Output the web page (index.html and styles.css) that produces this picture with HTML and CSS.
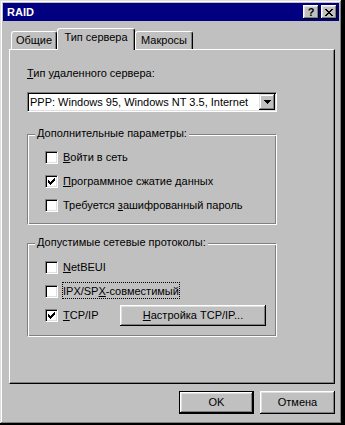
FILE: index.html
```html
<!DOCTYPE html>
<html lang="ru">
<head>
<meta charset="utf-8">
<title>RAID</title>
<link rel="stylesheet" href="styles.css">
</head>
<body>
<div class="window">
  <div class="titlebar">
    <span class="title">RAID</span>
    <div class="caption-btns">
      <span class="cbtn help">?</span>
      <span class="cbtn close"><svg viewBox="0 0 8 7" shape-rendering="crispEdges"><path d="M0 0h2v1h-2zM6 0h2v1h-2zM1 1h2v1h-2zM5 1h2v1h-2zM2 2h4v1h-4zM3 3h2v1h-2zM2 4h4v1h-4zM1 5h2v1h-2zM5 5h2v1h-2zM0 6h2v1h-2zM6 6h2v1h-2z" fill="#000"/></svg></span>
    </div>
  </div>

  <div class="tabs">
    <div class="tab tab-general">Общие</div>
    <div class="tab tab-server active">Тип сервера</div>
    <div class="tab tab-macro">Макросы</div>
  </div>

  <div class="panel">
    <div class="field-label"><u>Т</u>ип удаленного сервера:</div>
    <div class="combo">
      <span class="combo-text">PPP: Windows 95, Windows NT 3.5, Internet</span>
      <span class="combo-btn"><svg viewBox="0 0 7 4" shape-rendering="crispEdges"><path d="M0 0h7v1h-7zM1 1h5v1h-5zM2 2h3v1h-3zM3 3h1v1h-1z" fill="#000"/></svg></span>
    </div>

    <div class="group group-extra">
      <div class="group-title">Дополнительные параметры:</div>
      <div class="check-row row-a">
        <span class="box"></span>
        <span class="check-label"><u>В</u>ойти в сеть</span>
      </div>
      <div class="check-row row-b">
        <span class="box"><svg viewBox="0 0 7 7" shape-rendering="crispEdges"><path d="M6 0h1v1h-1zM5 1h2v1h-2zM0 2h1v1h-1zM4 2h3v1h-3zM0 3h2v1h-2zM3 3h3v1h-3zM0 4h5v1h-5zM1 5h3v1h-3zM2 6h1v1h-1z" fill="#000"/></svg></span>
        <span class="check-label"><u>П</u>рограммное сжатие данных</span>
      </div>
      <div class="check-row row-b">
        <span class="box"></span>
        <span class="check-label">Требуется <u>з</u>ашифрованный пароль</span>
      </div>
    </div>

    <div class="group group-proto">
      <div class="group-title">Допустимые сетевые протоколы:</div>
      <div class="check-row row-c">
        <span class="box"></span>
        <span class="check-label"><u>N</u>etBEUI</span>
      </div>
      <div class="check-row row-b">
        <span class="box"></span>
        <span class="check-label focus">IPX/SP<u>X</u>-совместимый</span>
      </div>
      <div class="check-row row-tcp">
        <div class="tcp-check">
          <span class="box"><svg viewBox="0 0 7 7" shape-rendering="crispEdges"><path d="M6 0h1v1h-1zM5 1h2v1h-2zM0 2h1v1h-1zM4 2h3v1h-3zM0 3h2v1h-2zM3 3h3v1h-3zM0 4h5v1h-5zM1 5h3v1h-3zM2 6h1v1h-1z" fill="#000"/></svg></span>
          <span class="check-label"><u>T</u>CP/IP</span>
        </div>
        <button class="btn btn-setup"><u>Н</u>астройка TCP/IP...</button>
      </div>
    </div>
  </div>

  <div class="footer">
    <button class="btn default">OK</button>
    <button class="btn">Отмена</button>
  </div>
</div>
</body>
</html>
```

FILE: styles.css
```css
* {
  box-sizing: border-box;
}

body {
  margin: 0;
  background: #000;
  font-family: "Liberation Sans", Arial, sans-serif;
  font-size: 11px;
  line-height: 13px;
  color: #000;
}

.window {
  width: 342px;
  height: 424px;
  padding: 3px;
  background: #c0c0c0;
  box-shadow: inset -1px -1px #000, inset 1px 1px #dfdfdf, inset -2px -2px #808080, inset 2px 2px #fff;
  display: flex;
  flex-direction: column;
}

.titlebar {
  height: 18px;
  flex-shrink: 0;
  background: #000080;
  color: #fff;
  display: flex;
  align-items: center;
  justify-content: space-between;
  padding: 0 2px 0 4px;
}

.title {
  font-weight: bold;
  font-size: 11px;
}

.caption-btns {
  display: flex;
  gap: 2px;
}

.cbtn {
  width: 16px;
  height: 14px;
  background: #c0c0c0;
  box-shadow: inset -1px -1px #000, inset 1px 1px #fff, inset -2px -2px #808080, inset 2px 2px #dfdfdf;
  display: flex;
  align-items: center;
  justify-content: center;
  color: #000;
}

.help {
  font-weight: bold;
  font-size: 11px;
  line-height: 14px;
  padding-bottom: 1px;
}

.close svg {
  width: 8px;
  height: 7px;
  display: block;
}

.tabs {
  display: flex;
  align-items: flex-end;
  height: 21px;
  margin-top: 7px;
  padding-left: 8px;
  flex-shrink: 0;
}

.tab {
  height: 18px;
  padding-top: 2px;
  text-align: center;
  white-space: nowrap;
  background: #c0c0c0;
  border: 1px solid #fff;
  border-right-color: #000;
  border-bottom: none;
  border-radius: 3px 3px 0 0;
  box-shadow: inset -1px 0 #808080;
}

.tab-general { width: 46px; }
.tab-server { width: 78px; }
.tab-macro { width: 58px; }

.tab.active {
  height: 22px;
  margin-bottom: -1px;
  position: relative;
  z-index: 1;
}

.panel {
  height: 335px;
  flex-shrink: 0;
  margin: 0 4px 0 6px;
  border: 1px solid;
  border-color: #fff #000 #000 #fff;
  box-shadow: inset -1px -1px #808080;
  padding: 17px 0 0 17px;
  display: flex;
  flex-direction: column;
  align-items: flex-start;
}

.combo {
  margin-top: 12px;
  width: 250px;
  height: 20px;
  display: flex;
  padding: 1px;
  border: 1px solid;
  border-color: #808080 #fff #fff #808080;
  box-shadow: inset 1px 1px #000, inset -1px -1px #dfdfdf;
  background: #fff;
}

.combo-text {
  flex: 1;
  padding-left: 1px;
  line-height: 16px;
  white-space: nowrap;
  overflow: hidden;
}

.combo-btn {
  width: 16px;
  height: 16px;
  flex-shrink: 0;
  background: #c0c0c0;
  box-shadow: inset -1px -1px #000, inset 1px 1px #dfdfdf, inset -2px -2px #808080, inset 2px 2px #fff;
  display: flex;
  align-items: center;
  justify-content: center;
}

.combo-btn svg {
  width: 7px;
  height: 4px;
  display: block;
}

.group {
  width: 250px;
  border: 1px solid;
  border-color: #808080 #fff #fff #808080;
  box-shadow: inset 1px 1px #fff, inset -1px -1px #808080;
  display: flex;
  flex-direction: column;
  align-items: flex-start;
}

.group-extra {
  margin-top: 22px;
  padding-bottom: 12px;
}

.group-proto {
  margin-top: 18px;
  padding-bottom: 10px;
}

.group-title {
  margin: -8px 0 0 7px;
  padding: 0 2px;
  background: #c0c0c0;
  white-space: nowrap;
}

.check-row {
  display: flex;
  align-items: center;
  gap: 5px;
  height: 13px;
  margin-left: 17px;
  white-space: nowrap;
}

.row-a { margin-top: 11px; }
.row-b { margin-top: 11px; }
.row-c { margin-top: 12px; }

.row-tcp {
  margin-top: 7px;
  height: 21px;
  gap: 0;
}

.tcp-check {
  width: 75px;
  display: flex;
  align-items: center;
  gap: 5px;
}

.box {
  width: 13px;
  height: 13px;
  flex-shrink: 0;
  border: 1px solid;
  border-color: #808080 #fff #fff #808080;
  box-shadow: inset 1px 1px #000, inset -1px -1px #dfdfdf;
  background: #fff;
  display: flex;
  align-items: center;
  justify-content: center;
}

.box svg {
  width: 7px;
  height: 7px;
  display: block;
}

.focus {
  border: 1px dotted #000;
  margin: -3px -1px -1px -1px;
  padding-top: 2px;
}

.footer {
  display: flex;
  justify-content: flex-end;
  gap: 6px;
  margin-top: 7px;
  padding-right: 4px;
  flex-shrink: 0;
}

.btn {
  width: 75px;
  height: 23px;
  padding: 0;
  border: none;
  font: inherit;
  color: #000;
  background: #c0c0c0;
  box-shadow: inset -1px -1px #000, inset 1px 1px #fff, inset -2px -2px #808080, inset 2px 2px #dfdfdf;
}

.btn.default {
  border: 1px solid #000;
}

.btn-setup {
  width: 146px;
  height: 21px;
}
```
